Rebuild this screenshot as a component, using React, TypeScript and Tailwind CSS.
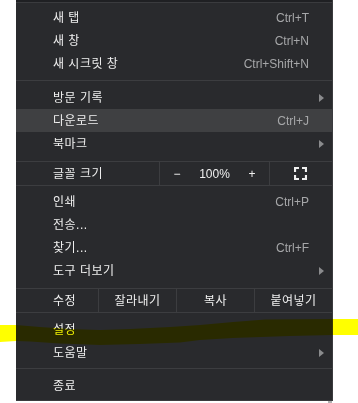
import React from 'react';

type Item = { label: string; shortcut?: string; arrow?: boolean; active?: boolean };

const font = { fontFamily: '"Liberation Sans", "Noto Sans CJK KR", sans-serif' };

const Arrow = () => (
  <svg width="5" height="8" viewBox="0 0 5 8" className="absolute right-[8px] top-[8px]">
    <path d="M0 0 L5 4 L0 8 Z" fill="#8a8b8d" />
  </svg>
);

const Row: React.FC<{ item: Item }> = ({ item }) => (
  <div
    className={`relative flex items-center h-[23px] pl-[37px] pr-[23px] ${
      item.active ? 'bg-[#3f4042]' : ''
    }`}
  >
    <span className="flex-1 text-[12px] tracking-[0.5px] text-[#f0f0f0]">{item.label}</span>
    {item.shortcut && (
      <span className="text-[12px] text-[#a6a7a9]">{item.shortcut}</span>
    )}
    {item.arrow && <Arrow />}
  </div>
);

const Sep: React.FC<{ top: number; bottom: number }> = ({ top, bottom }) => (
  <div
    className="h-px bg-[#3c3d40]"
    style={{ marginTop: top, marginBottom: bottom }}
  />
);

const FullscreenIcon = () => (
  <svg width="13" height="13" viewBox="0 0 13 13" fill="none" stroke="#f0f0f0" strokeWidth="2.2">
    <path d="M1 5 V1 H5" />
    <path d="M8 1 H12 V5" />
    <path d="M12 8 V12 H8" />
    <path d="M5 12 H1 V8" />
  </svg>
);

export default function App() {
  return (
    <div className="relative w-[358px] h-[403px] bg-white overflow-hidden" style={font}>
      <div className="ml-[16px] w-[317px] h-[401px] bg-[#292a2d] border-r border-b border-[#3a3b3e] flex flex-col">
        {/* top edge of the cropped menu */}
        <div className="h-[2px] bg-[#1f2023]" />
        <div className="h-px bg-[#3a3b3e]" />
        <div className="pt-[3px]">
          {[
            { label: '새 탭', shortcut: 'Ctrl+T' },
            { label: '새 창', shortcut: 'Ctrl+N' },
            { label: '새 시크릿 창', shortcut: 'Ctrl+Shift+N' },
          ].map((it) => (
            <Row key={it.label} item={it} />
          ))}
        </div>
        <Sep top={5} bottom={5} />
        {[
          { label: '방문 기록', arrow: true },
          { label: '다운로드', shortcut: 'Ctrl+J', active: true },
          { label: '북마크', arrow: true },
        ].map((it) => (
          <Row key={it.label} item={it} />
        ))}

        {/* zoom row */}
        <div className="mt-[6px] flex h-[25px] border-t border-b border-[#3c3d40]">
          <div className="w-[144px] flex items-center pl-[37px] text-[12px] tracking-[0.5px] text-[#f0f0f0] border-r border-[#3c3d40]">
            글꼴 크기
          </div>
          <div className="w-[110px] flex items-center text-[12px] text-[#f0f0f0] border-r border-[#3c3d40]">
            <span className="w-[34px] text-center">−</span>
            <span className="w-[41px] text-center">100%</span>
            <span className="w-[34px] text-center">+</span>
          </div>
          <div className="flex-1 flex items-center justify-center pr-px">
            <FullscreenIcon />
          </div>
        </div>

        <div className="mt-[4px]">
          {[
            { label: '인쇄', shortcut: 'Ctrl+P' },
            { label: '전송...' },
            { label: '찾기...', shortcut: 'Ctrl+F' },
            { label: '도구 더보기', arrow: true },
          ].map((it) => (
            <Row key={it.label} item={it} />
          ))}
        </div>

        {/* edit row */}
        <div className="mt-[6px] flex h-[25px] border-t border-b border-[#3c3d40] text-[12px] tracking-[0.5px] text-[#f0f0f0]">
          <div className="w-[83px] flex items-center pl-[37px] border-r border-[#3c3d40]">수정</div>
          <div className="w-[78px] flex items-center justify-center border-r border-[#3c3d40]">잘라내기</div>
          <div className="w-[78px] flex items-center justify-center border-r border-[#3c3d40]">복사</div>
          <div className="flex-1 flex items-center justify-center">붙여넣기</div>
        </div>

        <div className="mt-[5px]">
          <Row item={{ label: '설정' }} />
          <Row item={{ label: '도움말', arrow: true }} />
        </div>
        <Sep top={4} bottom={5} />
        <Row item={{ label: '종료' }} />
      </div>
      <div className="absolute left-[328px] top-[401px] w-[4px] h-[2px] bg-[#b0b0b0]" />

      {/* yellow highlighter stroke over 설정 */}
      <svg
        className="absolute left-0 top-0 pointer-events-none mix-blend-multiply"
        width="358"
        height="403"
        viewBox="0 0 358 403"
      >
        <path
          d="M0 325 L16 325 L40 327 L70 329 L100 330 L130 329 L170 327 L200 325 L233 322 L265 319.5 L333 319 L358 319 L358 335 L333 335 L290 336 L233 338 L200 340 L180 342.5 L140 344 L100 345 L60 343.5 L30 341.5 L16 341 L0 342 Z"
          fill="#ffff00"
        />
      </svg>
    </div>
  );
}
